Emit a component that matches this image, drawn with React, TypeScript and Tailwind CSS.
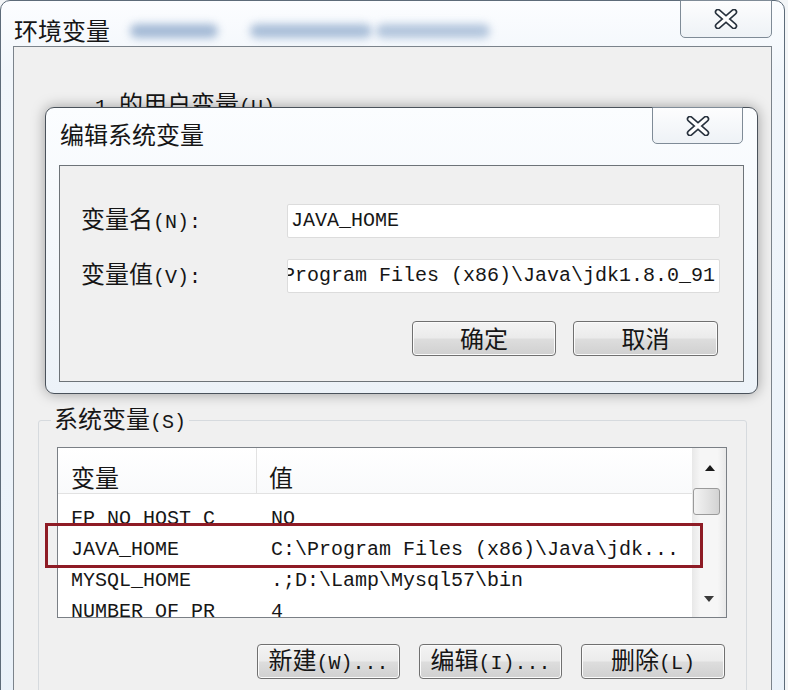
import React from "react"

const cjkCls = "text-[24px] leading-[30px] font-['Noto_Sans_CJK_SC',sans-serif]"
const monoCls = "text-[20px] leading-[30px] [font-family:'Liberation_Mono','Courier_New',monospace]"

// splits a label into CJK runs and ASCII runs, like SimSun's full/half width
function Txt({ s }: { s: string }) {
  const parts = s.split(/([\u3400-\u9fff]+)/).filter(Boolean)
  return (
    <span className="whitespace-pre text-[#161616]">
      {parts.map((p, i) =>
        /[\u3400-\u9fff]/.test(p) ? (
          <span key={i} className={cjkCls}>{p}</span>
        ) : (
          <span key={i} className={monoCls}>{p}</span>
        )
      )}
    </span>
  )
}

function CloseX() {
  return (
    <svg width="26" height="20" viewBox="0 0 26 20">
      <path d="M5 3 L21 17 M21 3 L5 17" stroke="#27313d" strokeWidth="6.5" strokeLinecap="round" fill="none" />
      <path d="M5 3 L21 17 M21 3 L5 17" stroke="#ffffff" strokeWidth="3.4" strokeLinecap="round" fill="none" />
    </svg>
  )
}

function WinButton({ label, w }: { label: string; w: string }) {
  return (
    <button
      className={`${w} h-[35px] flex items-center justify-center rounded-[4px] border border-[#707070] bg-[linear-gradient(180deg,#f4f4f4_0%,#ebebeb_48%,#dddddd_52%,#d0d0d0_100%)] shadow-[inset_0_0_0_1px_#fbfbfb]`}
    >
      <Txt s={label} />
    </button>
  )
}

const rows = [
  { name: "FP_NO_HOST_C", value: "NO" },
  { name: "JAVA_HOME", value: "C:\\Program Files (x86)\\Java\\jdk..." },
  { name: "MYSQL_HOME", value: ".;D:\\Lamp\\Mysql57\\bin" },
  { name: "NUMBER_OF_PR", value: "4" },
]

export default function App() {
  return (
    <div className="relative w-[788px] h-[690px] overflow-hidden bg-[#f3f5f7]">
      {/* Outer window: 环境变量 */}
      <div className="w-[785px] h-[720px] rounded-t-[10px] border border-[#5d6b79] bg-[linear-gradient(180deg,#fcfdff_0%,#f1f6fb_70px,#e9f1f9_100%)] flex flex-col">
        <div className="h-[57px] flex items-start pl-[13px] pr-[12px]">
          <div className="mt-[14px] flex items-center">
            <Txt s="环境变量" />
            <div className="ml-[20px] w-[88px] h-[14px] rounded-full bg-[#8ea9cb] blur-[4px] opacity-80" />
            <div className="ml-[32px] w-[122px] h-[14px] rounded-full bg-[#95afcf] blur-[4px] opacity-80" />
            <div className="ml-[4px] w-[114px] h-[14px] rounded-full bg-[#95afcf] blur-[4px] opacity-70" />
          </div>
          <button className="ml-auto -mt-px w-[92px] h-[38px] flex items-center justify-center rounded-b-[5px] border border-[#7f8b97] bg-[linear-gradient(180deg,#fdfdfe,#eef2f6)]">
            <CloseX />
          </button>
        </div>

        <div className="mx-[12px] flex-1 border border-[#7b838b] bg-[#f0f0f0] pt-[41px]">
          {/* user variables, mostly hidden behind the edit dialog */}
          <div className="h-[315px] pl-[81px]">
            <Txt s="1 的用户变量(U)" />
          </div>

          {/* 系统变量 group */}
          <fieldset className="ml-[24px] w-[709px] h-[320px] rounded-[3px] border border-[#d6dade]">
            <legend className="ml-[12px] px-[3px]">
              <Txt s="系统变量(S)" />
            </legend>

            <div className="mt-[9px] ml-[18px] w-[670px] h-[171px] border border-[#7a7f85] bg-white flex">
              <div className="flex-1 overflow-hidden">
                <div className="h-[46px] flex border-b border-[#e2e2e2] bg-[linear-gradient(180deg,#ffffff,#f9fafb)]">
                  <div className="w-[199px] pl-[13px] pt-[14px] border-r border-[#e2e2e2]">
                    <Txt s="变量" />
                  </div>
                  <div className="pl-[12px] pt-[14px]">
                    <Txt s="值" />
                  </div>
                </div>
                <div className="pt-[9px]">
                  {rows.map((r) => (
                    <div key={r.name} className="h-[31px] flex items-center">
                      <div className="w-[199px] pl-[13px]">
                        <Txt s={r.name} />
                      </div>
                      <div className="pl-[14px]">
                        <Txt s={r.value} />
                      </div>
                    </div>
                  ))}
                </div>
              </div>

              {/* scrollbar */}
              <div className="w-[34px] flex flex-col bg-[linear-gradient(90deg,#e8e8e8,#f6f6f6_25%,#f6f6f6_75%,#e8e8e8)]">
                <div className="h-[40px] flex items-center justify-center pl-[2px]">
                  <svg width="10" height="6" viewBox="0 0 10 6">
                    <path d="M0 6 L5 0 L10 6 Z" fill="#1a1a1a" />
                  </svg>
                </div>
                <div className="ml-[1px] w-[27px] h-[27px] rounded-[3px] border border-[#9a9a9a] bg-[linear-gradient(90deg,#f3f3f3,#e2e2e2_55%,#d3d3d3)]" />
                <div className="flex-1" />
                <div className="h-[36px] flex items-center justify-center">
                  <svg width="10" height="6" viewBox="0 0 10 6">
                    <path d="M0 0 L10 0 L5 6 Z" fill="#3a3a3a" />
                  </svg>
                </div>
              </div>
            </div>

            <div className="mt-[26px] flex justify-end gap-[19px] pr-[21px]">
              <WinButton label="新建(W)..." w="w-[143px]" />
              <WinButton label="编辑(I)..." w="w-[143px]" />
              <WinButton label="删除(L)" w="w-[144px]" />
            </div>
          </fieldset>
        </div>
      </div>

      {/* Edit dialog window on top */}
      <div className="absolute left-[45px] top-[107px] w-[713px] h-[287px] rounded-[9px] border border-[#4a525b] bg-[linear-gradient(180deg,#fbfdff,#ecf2f8)] shadow-[0_0_14px_rgba(0,0,0,0.35)] flex flex-col">
        <div className="h-[57px] flex items-start pl-[14px] pr-[14px]">
          <div className="mt-[11px]">
            <Txt s="编辑系统变量" />
          </div>
          <button className="ml-auto -mt-px w-[91px] h-[37px] flex items-center justify-center rounded-b-[5px] border border-[#7f8b97] bg-[linear-gradient(180deg,#fdfdfe,#eef2f6)]">
            <CloseX />
          </button>
        </div>
        <div className="mx-[13px] h-[217px] border border-[#6d7378] bg-[#f0f0f0] pt-[37px] pl-[21px] pr-[22px]">
          <div className="flex items-center">
            <div className="w-[206px]">
              <Txt s="变量名(N):" />
            </div>
            <div className="w-[433px] h-[34px] flex items-center pl-[3px] bg-white border border-[#dcdcdc] rounded-[2px]">
              <Txt s="JAVA_HOME" />
            </div>
          </div>
          <div className="mt-[20px] flex items-center">
            <div className="w-[206px]">
              <Txt s="变量值(V):" />
            </div>
            <div className="w-[433px] h-[34px] flex items-center overflow-hidden bg-white border border-[#dcdcdc] rounded-[2px]">
              <div className="-ml-[5px] shrink-0">
                <Txt s="Program Files (x86)\Java\jdk1.8.0_91" />
              </div>
            </div>
          </div>
          <div className="mt-[28px] flex justify-end gap-[17px] pr-[3px]">
            <WinButton label="确定" w="w-[144px]" />
            <WinButton label="取消" w="w-[145px]" />
          </div>
        </div>
      </div>

      {/* red highlight around JAVA_HOME row */}
      <div className="absolute left-[45px] top-[523px] w-[658px] h-[45px] border-[3px] border-[#8e1b25]" />
    </div>
  )
}
